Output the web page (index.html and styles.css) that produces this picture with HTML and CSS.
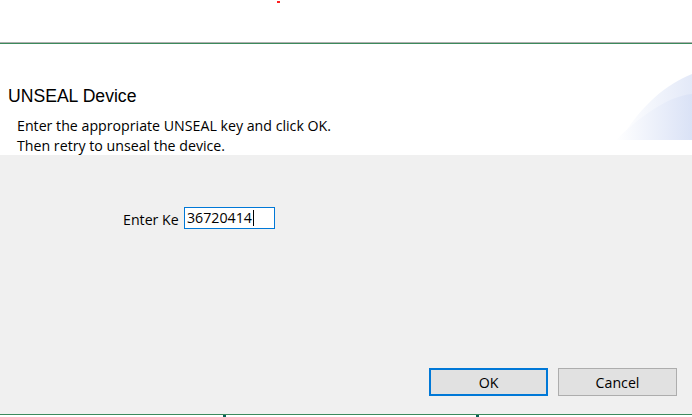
FILE: index.html
```html
<!DOCTYPE html>
<html lang="en">
<head>
  <meta charset="UTF-8" />
  <title>UNSEAL Device</title>
  <link rel="stylesheet" href="styles.css">
</head>
<body>

  <div class="top">
    <span class="dot"></span>
  </div>
  <div class="rule"></div>

  <div class="header">
    <svg class="swoosh" width="80" height="70" viewBox="0 0 80 70">
      <defs>
        <linearGradient id="g1" x1="0" y1="0" x2="1" y2="0">
          <stop offset="0" stop-color="#ffffff" />
          <stop offset="1" stop-color="#e3e9f8" />
        </linearGradient>
        <linearGradient id="g2" x1="0" y1="0" x2="1" y2="0">
          <stop offset="0" stop-color="#ffffff" />
          <stop offset="1" stop-color="#dae2f6" />
        </linearGradient>
      </defs>
      <path d="M8 66 C 30 30, 55 10, 80 0 L 80 66 Z" fill="url(#g1)" />
      <path d="M4 66 C 25 45, 55 22, 80 20 L 80 66 Z" fill="url(#g2)" />
    </svg>
    <h2 class="title">UNSEAL Device</h2>
    <p class="desc">Enter the appropriate UNSEAL key and click OK.<br>Then retry to unseal the device.</p>
  </div>

  <div class="main">
    <div class="keyrow">
      <label class="keylabel" for="key">Enter Ke</label>
      <div class="keybox" id="key">36720414<span class="caret"></span></div>
    </div>
    <div class="buttons">
      <button class="btn btn-ok">OK</button>
      <button class="btn">Cancel</button>
    </div>
  </div>

  <div class="bottom">
    <span class="mark m1"></span>
    <span class="mark m2"></span>
  </div>

</body>
</html>
```

FILE: styles.css
```css
body {
  margin: 0;
  width: 692px;
  height: 417px;
  overflow: hidden;
  background: #ffffff;
  font-family: "Open Sans", "Noto Sans", sans-serif;
  color: #000;
}
.top {
  height: 42px;
  position: relative;
}
.dot {
  position: absolute;
  left: 277px;
  top: 1px;
  width: 3px;
  height: 2px;
  background: #ff2020;
}
.rule {
  height: 1px;
  background: #b0b0b0;
  border-bottom: 1px solid #3c8a5c;
}
.header {
  height: 111px;
  position: relative;
  overflow: hidden;
}
.swoosh {
  position: absolute;
  right: 0;
  top: 30px;
}
.title {
  margin: 0;
  padding: 42px 0 0 8px;
  font-family: "Liberation Sans", Arial, sans-serif;
  font-weight: normal;
  font-size: 17.6px;
  line-height: 20px;
}
.desc {
  margin: 10px 0 0 17px;
  font-size: 14.2px;
  line-height: 20px;
}
.main {
  height: 259px;
  background: #f0f0f0;
  display: flex;
  flex-direction: column;
}
.keyrow {
  display: flex;
  align-items: flex-start;
  margin: 52px 0 0 123px;
  gap: 6px;
}
.keylabel {
  font-size: 14.2px;
  line-height: 20px;
  width: 55px;
  white-space: nowrap;
  margin-top: 3px;
}
.keybox {
  width: 87px;
  height: 20px;
  border: 1px solid #0078d7;
  background: #fff;
  font-size: 14.2px;
  line-height: 20px;
  padding-left: 2px;
  box-sizing: content-box;
  display: flex;
  align-items: center;
}
.caret {
  display: inline-block;
  width: 1px;
  height: 16px;
  background: #000;
  margin-left: 1px;
}
.buttons {
  display: flex;
  gap: 10px;
  margin: 138px 0 0 429px;
}
.btn {
  width: 119px;
  height: 28px;
  background: #e1e1e1;
  border: 1px solid #adadad;
  font-family: "Open Sans", "Noto Sans", sans-serif;
  font-size: 14.2px;
  padding: 0;
  color: #000;
}
.btn-ok {
  border: 2px solid #0078d7;
}
.bottom {
  height: 2px;
  border-top: 1px solid #3c8a5c;
  position: relative;
}
.mark {
  position: absolute;
  top: 0;
  width: 3px;
  height: 2px;
  background: #0b5e55;
}
.m1 { left: 223px; }
.m2 { left: 476px; }
```
